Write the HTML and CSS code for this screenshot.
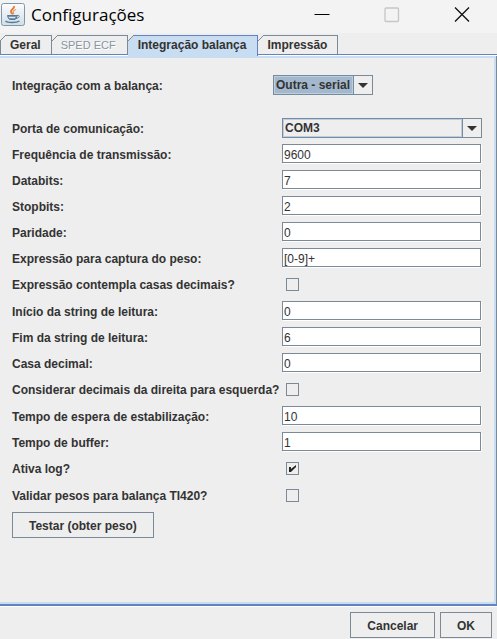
FILE: index.html
```
<!DOCTYPE html>
<html lang="pt-BR">
<head>
  <meta charset="UTF-8">
  <meta name="viewport" content="width=device-width, initial-scale=1.0">
  <title>Configurações</title>

  <link rel="stylesheet" href="styles.css">
</head>
<body>
<header class="titlebar">
  <svg class="app-icon" width="26" height="25" viewBox="0 0 26 25">
    <defs>
      <linearGradient id="tile" x1="0" y1="0" x2="0" y2="1">
        <stop offset="0" stop-color="#fdfdfd"/>
        <stop offset="1" stop-color="#d3dde5"/>
      </linearGradient>
    </defs>
    <rect x="1.5" y="1.5" width="23" height="22" rx="2" fill="url(#tile)" stroke="#7f97aa"/>
    <path d="M14 4c1 3-4 3.500-3 6 .3 1 1.500 1.500 1.500 2.500" fill="none" stroke="#e8772e" stroke-width="1.800"/>
    <path d="M16 7.500c-3 1-3.500 2.500-2 4.500" fill="none" stroke="#f09a55" stroke-width="1.300"/>
    <path d="M7.500 13.500h9.500c-.2 2-1 3.500-2 4h-5c-1.500-.5-2-2-2.500-4z" fill="#7d9cb5" stroke="#527b9b"/>
    <path d="M17 13.500c3-.7 3.500 2-1 3" fill="none" stroke="#527b9b"/>
    <path d="M9 15.500h6" stroke="#dce8ef"/>
    <path d="M5.500 19c2 2 11 2 14 0" fill="none" stroke="#527b9b" stroke-width="1.300"/>
  </svg>
  <h1 class="title">Configurações</h1>
  <div class="window-buttons">
    <button type="button" class="window-button" aria-label="Minimizar">
      <svg width="16" height="16" viewBox="0 0 16 16"><path d="M.5 7.500h15" stroke="#000"/></svg>
    </button>
    <button type="button" class="window-button" aria-label="Maximizar" disabled>
      <svg width="16" height="16" viewBox="0 0 16 16"><rect x="1" y="1" width="13.500" height="13.500" rx="1" fill="none" stroke="#c6c6c6" stroke-width="1.300"/></svg>
    </button>
    <button type="button" class="window-button" aria-label="Fechar">
      <svg width="16" height="16" viewBox="0 0 16 16"><path d="M1 .5l14 14M15 .5L1 14.500" stroke="#111" stroke-width="1.300"/></svg>
    </button>
  </div>
</header>

<nav class="tabs" role="tablist">
  <button type="button" class="tab" role="tab">Geral</button>
  <button type="button" class="tab" role="tab" disabled>SPED ECF</button>
  <button type="button" class="tab active" role="tab" aria-selected="true">Integração balança</button>
  <button type="button" class="tab" role="tab">Impressão</button>
</nav>

<main class="panel">
  <form class="form" id="config">
    <div class="row device">
      <label for="balanca">Integração com a balança:</label>
      <div class="combo focused">
        <select id="balanca"><option>Outra - serial</option></select>
        <span class="arrow"></span>
      </div>
    </div>

    <div class="row">
      <label for="porta">Porta de comunicação:</label>
      <div class="combo">
        <select id="porta"><option>COM3</option></select>
        <span class="arrow"></span>
      </div>
    </div>
    <div class="row">
      <label for="frequencia">Frequência de transmissão:</label>
      <input class="field" type="text" id="frequencia" value="9600">
    </div>
    <div class="row">
      <label for="databits">Databits:</label>
      <input class="field" type="text" id="databits" value="7">
    </div>
    <div class="row">
      <label for="stopbits">Stopbits:</label>
      <input class="field" type="text" id="stopbits" value="2">
    </div>
    <div class="row">
      <label for="paridade">Paridade:</label>
      <input class="field" type="text" id="paridade" value="0">
    </div>
    <div class="row">
      <label for="expressao">Expressão para captura do peso:</label>
      <input class="field" type="text" id="expressao" value="[0-9]+">
    </div>
    <div class="row check-row">
      <label for="decimais">Expressão contempla casas decimais?</label>
      <input class="check" type="checkbox" id="decimais">
    </div>
    <div class="row">
      <label for="inicio">Início da string de leitura:</label>
      <input class="field" type="text" id="inicio" value="0">
    </div>
    <div class="row">
      <label for="fim">Fim da string de leitura:</label>
      <input class="field" type="text" id="fim" value="6">
    </div>
    <div class="row">
      <label for="casa">Casa decimal:</label>
      <input class="field" type="text" id="casa" value="0">
    </div>
    <div class="row check-row">
      <label for="direita">Considerar decimais da direita para esquerda?</label>
      <input class="check" type="checkbox" id="direita">
    </div>
    <div class="row">
      <label for="espera">Tempo de espera de estabilização:</label>
      <input class="field" type="text" id="espera" value="10">
    </div>
    <div class="row">
      <label for="buffer">Tempo de buffer:</label>
      <input class="field" type="text" id="buffer" value="1">
    </div>
    <div class="row check-row">
      <label for="log">Ativa log?</label>
      <input class="check" type="checkbox" id="log" checked>
    </div>
    <div class="row check-row">
      <label for="ti420">Validar pesos para balança TI420?</label>
      <input class="check" type="checkbox" id="ti420">
    </div>
    <button type="button" class="button">Testar (obter peso)</button>
  </form>
</main>

<footer class="footer">
  <button type="button" class="button">Cancelar</button>
  <button type="submit" form="config" class="button">OK</button>
</footer>
</body>
</html>
```
FILE: styles.css
```
* {
  box-sizing: border-box;
}
body {
  margin: 0;
  min-height: 100vh;
  display: flex;
  flex-direction: column;
  background: #eee;
  color: #333;
  font: bold 12px "Liberation Sans", Arial, sans-serif;
}
button, input, select {
  margin: 0;
  color: inherit;
  font: inherit;
}

/* title bar */
.titlebar {
  display: flex;
  align-items: center;
  height: 33px;
  padding-bottom: 4px;
  background: #f3f3f3;
  color: #000;
}
.title {
  flex: 1;
  margin: 0 0 0 5px;
  font: 17px "Open Sans", "Noto Sans", sans-serif;
}
.window-buttons {
  display: flex;
}
.window-button {
  display: flex;
  align-items: center;
  justify-content: center;
  width: 70px;
  height: 29px;
  padding: 0;
  border: none;
  background: none;
}

/* tabs */
.tabs {
  display: flex;
  height: 22px;
  padding-top: 2px;
  border-bottom: 1px solid #6382bf;
  box-shadow: 0 1px #fff;
}
.tab {
  position: relative;
  height: 19px;
  padding: 0 10px 0 9px;
  border: 1px solid #7a8a99;
  border-width: 1px 1px 0 0;
  background: #eee;
  line-height: 18px;
}
.tab::before {
  content: "";
  position: absolute;
  top: -1px;
  left: 0;
  width: 6px;
  height: 6px;
  background: linear-gradient(135deg, #eee 42%, #7a8a99 42%, #7a8a99 58%, transparent 58%);
}
.tab:first-child {
  border-left-width: 1px;
}
.tab:first-child::before {
  left: -1px;
}
.tab:disabled {
  color: #8495a5;
  font-size: 11px;
  font-weight: normal;
  text-shadow: 1px 1px #fff;
  padding-right: 11px;
}
.tab.active {
  z-index: 1;
  height: 21px;
  padding: 0 11px 2px 10px;
  border-color: #6382bf;
  background: #c8ddf2;
}

/* tab content */
.panel {
  flex: 1;
  margin: 1px 1px 0 0;
  padding: 17px 12px 12px;
  border: 2px solid #c8ddf2;
  border-left: none;
  box-shadow: 1px 0 #7a8a99;
}
.form {
  display: flex;
  flex-direction: column;
  gap: 6px;
}
.row {
  display: grid;
  grid-template-columns: 270px 1fr;
  align-items: center;
  height: 20px;
}
.device {
  grid-template-columns: 261px 100px;
  margin-bottom: 17px;
}
.check-row {
  height: 21px;
}
label {
  padding-top: 2px;
  white-space: nowrap;
}
.check-row label {
  padding-top: 1px;
}
.field {
  align-self: start;
  min-width: 0;
  height: 19px;
  margin-right: 1px;
  padding: 2px 1px 0;
  border: 1px solid #7a8a99;
  outline: none;
  box-shadow: 1px 1px #fff;
  background: #fff;
  font-weight: normal;
}
.combo {
  display: flex;
  height: 20px;
  border: 1px solid #7a8a99;
}
.combo select {
  flex: 1;
  min-width: 0;
  padding: 0 0 0 1px;
  border: 1px solid #b8cfe5;
  border-radius: 0;
  appearance: none;
  background: #eee;
}
.combo.focused select {
  background: #a3b8cc;
}
.arrow {
  display: flex;
  align-items: center;
  justify-content: center;
  width: 19px;
  border-left: 1px solid #7a8a99;
}
.arrow::before {
  content: "";
  border: 5px solid transparent;
  border-top-color: #333;
  border-bottom: none;
}
.check {
  width: 13px;
  height: 13px;
  margin-left: 4px;
  border: 1px solid #7a8a99;
  appearance: none;
}
.check:checked::before {
  content: "";
  display: block;
  height: 11px;
  background: #222;
  clip-path: polygon(18% 36%, 36% 36%, 36% 55%, 82% 18%, 82% 36%, 36% 82%, 18% 82%);
}
.button {
  align-self: flex-start;
  height: 26px;
  padding: 1px 16px 0;
  border: 1px solid #7a8a99;
  background: #eee;
}

/* bottom bar */
.footer {
  display: flex;
  justify-content: flex-end;
  gap: 5px;
  padding: 6px 5px 1px;
  border-top: 2px solid #6382bf;
  box-shadow: inset 0 1px #fff;
}
```
